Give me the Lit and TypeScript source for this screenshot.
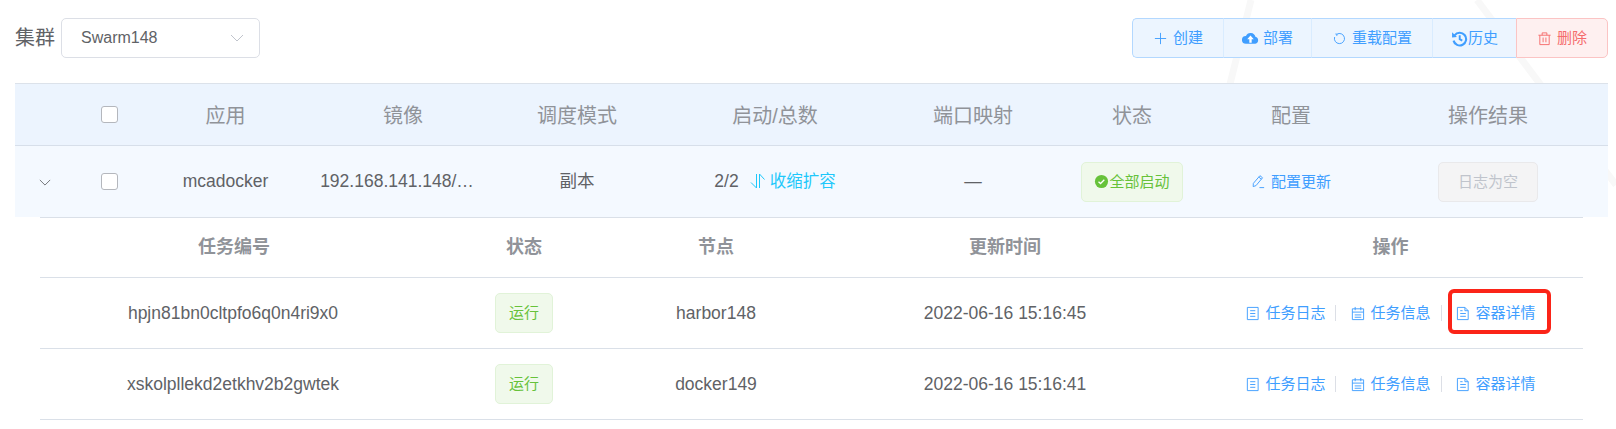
import { LitElement, html, css, svg } from "lit";
import { customElement } from "lit/decorators.js";

const ic = (body: unknown, cls = "") =>
  html`<svg class="ic ${cls}" viewBox="0 0 16 16" fill="none" stroke="currentColor" stroke-width="1">${body}</svg>`;

const plus = ic(svg`<path d="M8 2v12M2 8h12"/>`);
const cloud = ic(svg`<path fill="currentColor" stroke="none" d="M12.6 6.4A4.7 4.7 0 0 0 3.7 5.6 3.6 3.6 0 0 0 3.6 13h9a3.4 3.4 0 0 0 0-6.6z"/><path fill="#fff" stroke="none" d="M8 5.2 4.9 8.8h2V12h2.2V8.8h2z"/>`);
const reload = ic(svg`<path d="M5.2 3.4A5.4 5.4 0 1 1 2.8 6.4M3.6 3.2l1.7.2-.2 1.8"/>`);
const history = ic(svg`<path stroke-width="2" d="M3.4 5A6 6 0 1 1 2.4 10"/><path fill="currentColor" stroke="none" d="M1 2.2 5.6 6.6 1 7z"/><path stroke-width="1.8" d="M8.2 5v3.6l2.4 1.4"/>`);
const trash = ic(svg`<path d="M3 4.5V14.5H13V4.5M1.5 4.5h13M5.5 4.5V2h5v2.5M6.5 7v5M9.5 7v5"/>`);
const edit = ic(svg`<path d="M2.5 10 9.5 1.8l2.8 2.2-7 8.4-3 1zM8.3 3.3l2.8 2.2M9 14.5h5"/>`);
const tickets = ic(svg`<path d="M2.5 1.5h11.5v13H2.5zM5.5 5h5.5M5.5 8h5.5M5.5 11h5.5"/>`);
const calendar = ic(svg`<path d="M2.5 3h12v11.5h-12zM2.5 6.5h12M5.5 1v3.5M11.5 1v3.5M5 9.5h7M5 12h7"/>`);
const documentIc = ic(svg`<path d="M1.5 1.5h8l3.5 3.5v9.5H1.5zM9.5 1.5V5H13M4.5 8h6M4.5 11h6M4.5 5h2.5"/>`);
const sortIc = ic(svg`<path d="M6.5 1v14L1 9.5M9.5 15V1l5 5.5"/>`);
const okIc = ic(svg`<circle cx="8" cy="8" r="7" fill="currentColor" stroke="none"/><path stroke="#fff" stroke-width="1.4" d="M4.8 8.2 7 10.2l4-4"/>`);
const chevron = html`<svg class="chev" viewBox="0 0 14 8" fill="none" stroke="currentColor" stroke-width="1"><path d="M1 1l6 6 6-6"/></svg>`;

const tasks = [
  { id: "hpjn81bn0cltpfo6q0n4ri9x0", node: "harbor148", time: "2022-06-16 15:16:45", mark: true },
  { id: "xskolpllekd2etkhv2b2gwtek", node: "docker149", time: "2022-06-16 15:16:41", mark: false },
];

@customElement("app-root")
export class AppRoot extends LitElement {
  static styles = css`
    :host {
      display: block;
      box-sizing: border-box;
      height: 429px;
      overflow: hidden;
      padding: 18px 8px 0 15px;
      color: #606266;
      font-family: "Liberation Sans", "Noto Sans CJK SC", sans-serif;
      font-size: 17.5px;
      line-height: 1.2;
      background-color: #fff;
      background-image: url("data:image/svg+xml,%3Csvg xmlns='http://www.w3.org/2000/svg' width='1616' height='429'%3E%3Cpath d='M1251 0 1230 84M1477 0 1616 185' stroke='%23f8f8f8' stroke-width='7' fill='none'/%3E%3C/svg%3E");
    }
    .ic { width: 15px; height: 15px; flex: none; display: block; }
    .chev { display: block; width: 14px; height: 8px; }

    .toolbar { display: flex; align-items: center; justify-content: space-between; height: 40px; margin-bottom: 25px; }
    .cluster { display: flex; align-items: center; gap: 6px; font-size: 20px; }
    .select {
      box-sizing: border-box; width: 199px; height: 40px; background: #fff;
      border: 1px solid #dcdfe6; border-radius: 5px; padding: 0 15px 0 19px;
      display: flex; align-items: center; justify-content: space-between; font-size: 16px; color: #c0c4cc;
    }
    .select span { color: #606266; }

    .group { display: flex; height: 40px; font-size: 15px; }
    .btn {
      display: flex; align-items: center; gap: 5px; box-sizing: border-box; padding: 0 20px;
      background: #ecf5ff; color: #409eff;
      border: 1px solid #b3d8ff; border-left-color: #d9ecff; border-right: 0;
    }
    .btn.first { border-left-color: #b3d8ff; border-radius: 5px 0 0 5px; }
    .btn.tight { gap: 0; padding: 0 18px; }
    .btn.cloud { gap: 4px; padding: 0 18px; }
    .btn.cloud .ic { width: 17px; height: 17px; }
    .btn.tight .ic { width: 17px; height: 17px; }
    .btn.danger {
      background: #fef0f0; color: #f56c6c; border: 1px solid #fbc4c4; border-radius: 0 5px 5px 0;
    }

    .row { display: grid; grid-template-columns: 60px 70px 161px 194px 154px 242px 154px 164px 154px 240px; align-items: center; text-align: center; box-sizing: border-box; }
    .row > div { display: flex; align-items: center; justify-content: center; min-width: 0; }
    .head { height: 63px; background: #ecf4fe; border-top: 1px solid #dce2ea; border-bottom: 1px solid #d7dfea; font-size: 20px; color: #909399; }
    .head > .title { padding-top: 2px; }
    .body { height: 71px; background: #f4f9ff; }
    .row > .image { padding-right: 12px; }
    .box { box-sizing: border-box; width: 17px; height: 17px; border: 1px solid #b4b7bd; border-radius: 3px; background: #fff; margin-left: -2px; }
    .chev-cell { color: #606266; padding-top: 2px; }
    .chev-cell .chev { width: 12px; height: 7px; }
    .scale { display: inline-flex; align-items: center; color: #1ec8fb; font-size: 16.5px; margin-left: 11px; }
    .scale .ic { width: 16px; height: 16px; margin-right: 4px; }
    .tag {
      box-sizing: border-box; height: 40px; display: inline-flex; align-items: center; padding: 0 12.5px;
      background: #f0f9eb; border: 1px solid #e1f3d8; border-radius: 5px; color: #67c23a; font-size: 15px;
    }
    .link { display: inline-flex; align-items: center; gap: 5px; color: #409eff; font-size: 15px; }
    .log {
      box-sizing: border-box; width: 100px; height: 40px; display: inline-flex; align-items: center; justify-content: center;
      background: #f4f4f5; border: 1px solid #e9e9eb; border-radius: 5px; color: #c0c4cc; font-size: 15px;
    }

    .sub { margin-left: 25px; width: 1543px; border-top: 1px solid #dae0e8; background: #fff; }
    .srow { display: grid; grid-template-columns: 388px 192px 192px 386px 385px; align-items: center; text-align: center; border-bottom: 1px solid #dae0e8; height: 70px; }
    .srow.shead { height: 59px; font-size: 18px; font-weight: 700; color: #909399; }
    .srow > .task { padding-right: 2px; }
    .actions { display: flex; align-items: center; justify-content: center; }
    .sep { width: 1px; height: 16px; background: #dcdfe6; margin: 0 14px 0 10px; }
    .mark { position: relative; }
    .mark::after {
      content: ""; position: absolute; left: -8px; right: -15px; top: -15px; bottom: -12px;
      border: 4px solid #fb2418; border-radius: 6px; pointer-events: none;
    }
  `;

  render() {
    return html`
      <div class="toolbar">
        <div class="cluster">集群<div class="select"><span>Swarm148</span>${chevron}</div></div>
        <div class="group">
          <div class="btn first">${plus}创建</div>
          <div class="btn cloud">${cloud}部署</div>
          <div class="btn">${reload}重载配置</div>
          <div class="btn tight">${history}历史</div>
          <div class="btn danger">${trash}删除</div>
        </div>
      </div>
      <div class="row head">
        <div></div><div><span class="box"></span></div>
        ${["应用", "镜像", "调度模式", "启动/总数", "端口映射", "状态", "配置", "操作结果"].map(
          (t) => html`<div class="title">${t}</div>`
        )}
      </div>
      <div class="row body">
        <div class="chev-cell">${chevron}</div><div><span class="box"></span></div>
        <div>mcadocker</div><div class="image">192.168.141.148/…</div><div>副本</div>
        <div>2/2<span class="scale">${sortIc}收缩扩容</span></div>
        <div>—</div>
        <div><span class="tag">${okIc}全部启动</span></div>
        <div><span class="link">${edit}配置更新</span></div>
        <div><span class="log">日志为空</span></div>
      </div>
      <div class="sub">
        <div class="srow shead"><div>任务编号</div><div>状态</div><div>节点</div><div>更新时间</div><div>操作</div></div>
        ${tasks.map(
          (t) => html`<div class="srow">
            <div class="task">${t.id}</div>
            <div><span class="tag">运行</span></div>
            <div>${t.node}</div>
            <div>${t.time}</div>
            <div class="actions">
              <span class="link">${tickets}任务日志</span><span class="sep"></span>
              <span class="link">${calendar}任务信息</span><span class="sep"></span>
              <span class="link ${t.mark ? "mark" : ""}">${documentIc}容器详情</span>
            </div>
          </div>`
        )}
      </div>
    `;
  }
}
